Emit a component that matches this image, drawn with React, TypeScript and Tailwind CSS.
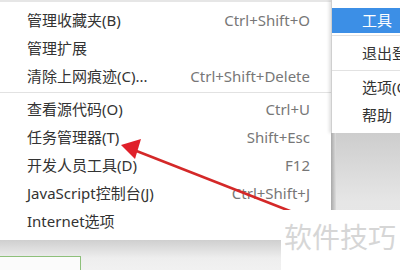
import React from "react";

const font = { fontFamily: '"Noto Sans", "Noto Sans CJK SC", sans-serif' };

function Item({ label, shortcut }: { label: string; shortcut?: string }) {
  return (
    <div className="flex h-[28px] items-center justify-between whitespace-nowrap pl-[27px] pr-[21px]">
      <span className="text-[15px] leading-none text-[#333]">{label}</span>
      {shortcut && <span className="text-[15px] leading-none text-[#777]">{shortcut}</span>}
    </div>
  );
}

export default function App() {
  return (
    <div className="relative h-[270px] w-[400px] overflow-hidden bg-[#ececec]" style={font}>
      <div className="flex h-full">
        {/* left column */}
        <div className="flex w-[331px] shrink-0 flex-col">
          <div className="flex h-[240px] flex-col border-t-2 border-[#e6e6e6] bg-white pt-[4px] pb-[5px]">
            <Item label="管理收藏夹(B)" shortcut="Ctrl+Shift+O" />
            <Item label="管理扩展" />
            <Item label="清除上网痕迹(C)..." shortcut="Ctrl+Shift+Delete" />
            <div className="my-[2px] h-px bg-[#e2e2e2]" />
            <Item label="查看源代码(O)" shortcut="Ctrl+U" />
            <Item label="任务管理器(T)" shortcut="Shift+Esc" />
            <Item label="开发人员工具(D)" shortcut="F12" />
            <Item label="JavaScript控制台(J)" shortcut="Ctrl+Shift+J" />
            <Item label="Internet选项" />
          </div>
          <div className="flex-1 bg-gradient-to-b from-[#cfcfcf] via-[#eeeeee] to-[#f3f3f3] pt-[16px]">
            <div className="h-[20px] w-[81px] border-t border-r border-[#8dc07a] bg-[#fbfbfb]" />
          </div>
        </div>
        {/* right column */}
        <div className="flex min-w-0 flex-1 flex-col">
          <div className="flex h-[133px] flex-col overflow-hidden border-l border-[#cfcfcf] bg-white pt-[8px] shadow-[-2px_0_3px_rgba(0,0,0,0.12)]">
            <div className="flex h-[25px] items-center bg-[#3c8fe6] pl-[30px]">
              <span className="text-[15px] leading-none text-white">工具</span>
            </div>
            <div className="flex h-[5px] items-center">
              <div className="h-px w-full bg-[#e2e2e2]" />
            </div>
            <div className="flex h-[30px] items-center whitespace-nowrap pl-[30px]">
              <span className="text-[15px] leading-none text-[#333]">退出登录</span>
            </div>
            <div className="flex h-[5px] items-center">
              <div className="h-px w-full bg-[#e2e2e2]" />
            </div>
            <div className="flex h-[28px] items-center whitespace-nowrap pl-[30px]">
              <span className="text-[15px] leading-none text-[#333]">选项(O)</span>
            </div>
            <div className="flex h-[28px] items-center whitespace-nowrap pl-[30px]">
              <span className="text-[15px] leading-none text-[#333]">帮助</span>
            </div>
          </div>
          <div className="flex flex-1">
            <div className="w-[5px] bg-gradient-to-r from-[#a8a8a8] to-[#dcdcdc]" />
            <div className="flex-1 bg-gradient-to-b from-[#cdcdcd] via-[#e6e6e6] to-[#e9e9e9]" />
          </div>
        </div>
      </div>

      {/* red arrow annotation */}
      <svg className="absolute left-0 top-0" width="400" height="270" viewBox="0 0 400 270">
        <line x1="134" y1="150" x2="295" y2="213" stroke="#d42828" strokeWidth="2.5" />
        <polygon points="121,145 141,139 135,159" fill="#e0202a" />
      </svg>

      {/* watermark */}
      <div className="absolute left-[281px] top-[210px] flex h-[60px] w-[119px] items-start bg-white pl-[3px] pt-[13px]">
        <span className="text-[28px] leading-none text-[#d6d6d6]">软件技巧</span>
      </div>
    </div>
  );
}
